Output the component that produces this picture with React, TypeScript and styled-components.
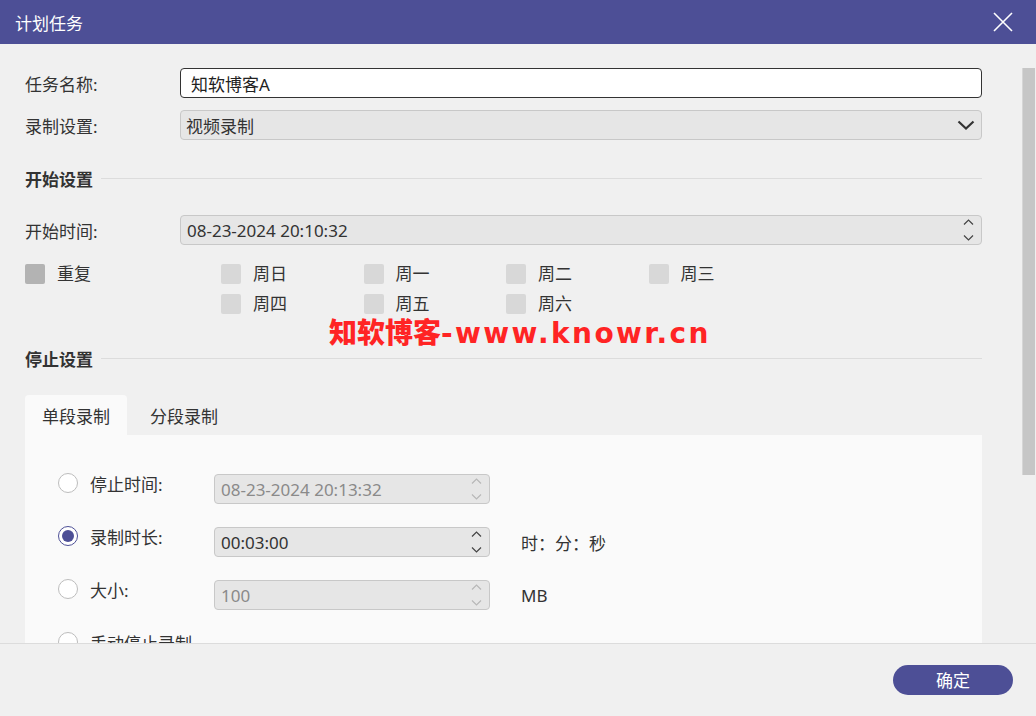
import React from 'react'
import styled, { createGlobalStyle, css } from 'styled-components'

const FONT = `"Noto Sans", "Noto Sans CJK SC", "Liberation Sans", sans-serif`
const ACCENT = '#4d4f96'

const GlobalStyle = createGlobalStyle`
  html, body { margin: 0; padding: 0; }
  body { font-family: ${FONT}; color: #333; background: #f0f0f0; }
  * { box-sizing: border-box; }
`

const Window = styled.div`
  width: 1036px;
  height: 716px;
  display: flex;
  flex-direction: column;
  background: #f0f0f0;
  overflow: hidden;
  position: relative;
`

const TitleBar = styled.div`
  height: 44px;
  flex: none;
  background: ${ACCENT};
  display: flex;
  align-items: center;
  justify-content: space-between;
  padding: 0 22px 0 15px;
  color: #fff;
  font-size: 17px;
`

const CloseBtn = styled.div`
  width: 22px;
  height: 22px;
  display: flex;
  align-items: center;
  justify-content: center;
`

const Body = styled.div`
  flex: 1;
  display: flex;
  overflow: hidden;
`

const Content = styled.div`
  flex: 1;
  padding: 24px 40px 0 25px;
  display: flex;
  flex-direction: column;
  position: relative;
`

const Rail = styled.div`
  width: 14px;
  flex: none;
  padding-top: 24px;
  padding-right: 1px;
`

const Thumb = styled.div`
  height: 407px;
  background: #c6c6c6;
  border-left: 1px solid #d6d6d6;
`

const FormRow = styled.div<{ $mt?: number }>`
  display: flex;
  align-items: center;
  height: 30px;
  margin-top: ${(p) => p.$mt ?? 0}px;
`

const Label = styled.div`
  width: 155px;
  flex: none;
  font-size: 17px;
  color: #333;
`

const boxBase = css`
  height: 30px;
  border-radius: 4px;
  display: flex;
  align-items: center;
  font-size: 17px;
  font-family: ${FONT};
`

const TextInput = styled.div`
  ${boxBase}
  flex: 1;
  background: #fff;
  border: 1px solid #333;
  padding-left: 10px;
  color: #222;
`

const SelectBox = styled.div`
  ${boxBase}
  flex: 1;
  background: #e6e6e6;
  border: 1px solid #c8c8c8;
  padding: 0 6px 0 5px;
  justify-content: space-between;
  color: #333;
`

const SpinBox = styled.div<{ $disabled?: boolean; $w?: number }>`
  ${boxBase}
  ${(p) => (p.$w ? `width: ${p.$w}px; flex: none;` : 'flex: 1;')}
  background: #e6e6e6;
  border: 1px solid #c8c8c8;
  padding: 0 7px 0 6px;
  justify-content: space-between;
  color: ${(p) => (p.$disabled ? '#8a8a8a' : '#333')};
`

const SpinArrows = styled.div`
  display: flex;
  flex-direction: column;
  gap: 10px;
`

const Section = styled.div<{ $mt: number }>`
  display: flex;
  align-items: center;
  margin-top: ${(p) => p.$mt}px;
  height: 24px;
  font-size: 17px;
  font-weight: 700;
  color: #333;
  &::after {
    content: '';
    flex: 1;
    height: 1px;
    background: #dcdcdc;
    margin-left: 8px;
  }
`

const RepeatRow = styled.div`
  display: flex;
  margin-top: 19px;
`

const RepeatCol = styled.div`
  width: 196px;
  flex: none;
`

const DayGrid = styled.div`
  display: grid;
  grid-template-columns: repeat(4, 142.5px);
  row-gap: 10px;
`

const CheckItem = styled.label`
  display: flex;
  align-items: center;
  height: 20px;
  line-height: 20px;
  font-size: 17px;
  color: #333;
`

const Box = styled.span<{ $dark?: boolean }>`
  width: 20px;
  height: 20px;
  border-radius: 2px;
  background: ${(p) => (p.$dark ? '#b3b3b3' : '#d8d8d8')};
  margin-right: 12px;
  flex: none;
`

const Watermark = styled.div`
  position: absolute;
  left: 329px;
  top: 273px;
  line-height: 28px;
  font-family: "Noto Sans CJK SC", sans-serif;
  font-size: 28px;
  font-weight: 900;
  color: #ff2424;
  white-space: nowrap;
  display: flex;
  align-items: baseline;
`

const WatermarkLatin = styled.span`
  font-family: "DejaVu Sans", sans-serif;
  font-weight: 700;
  font-size: 28px;
  letter-spacing: 2.4px;
`

const Tabs = styled.div`
  display: flex;
  margin-top: 25px;
  height: 40px;
`

const Tab = styled.div<{ $active?: boolean }>`
  height: 40px;
  padding: ${(p) => (p.$active ? '0 17px 0 17px' : '0 17px 0 23px')};
  display: flex;
  align-items: center;
  font-size: 17px;
  color: #333;
  border-radius: 4px 4px 0 0;
  background: ${(p) => (p.$active ? '#fafafa' : 'transparent')};
`

const Panel = styled.div`
  background: #fafafa;
  padding: 39px 0 30px 33px;
  display: flex;
  flex-direction: column;
  gap: 23px;
`

const OptionRow = styled.div`
  display: flex;
  align-items: center;
  height: 30px;
`

const RadioLabel = styled.div`
  display: flex;
  align-items: center;
  width: 156px;
  flex: none;
  font-size: 17px;
  color: #333;
  margin-top: -12px;
`

const Radio = styled.span<{ $checked?: boolean }>`
  width: 20px;
  height: 20px;
  border-radius: 50%;
  flex: none;
  margin-right: 12px;
  background: #fff;
  border: 1.5px solid ${(p) => (p.$checked ? ACCENT : '#bdbdbd')};
  display: flex;
  align-items: center;
  justify-content: center;
  &::after {
    content: '';
    width: 12px;
    height: 12px;
    border-radius: 50%;
    background: ${(p) => (p.$checked ? ACCENT : 'transparent')};
  }
`

const Unit = styled.div`
  margin-left: 31px;
  font-size: 17px;
  color: #333;
`

const Footer = styled.div`
  height: 73px;
  flex: none;
  border-top: 1px solid #dcdcdc;
  background: #f0f0f0;
  display: flex;
  align-items: center;
  justify-content: flex-end;
  padding: 0 23px 0 0;
  position: relative;
  z-index: 2;
`

const OkButton = styled.button`
  width: 120px;
  height: 30px;
  border: none;
  border-radius: 15px;
  background: ${ACCENT};
  color: #fff;
  font-family: ${FONT};
  font-size: 17px;
  margin-top: -1px;
`

const Chevron = ({ up, color = '#444' }: { up?: boolean; color?: string }) => (
  <svg width="11" height="6" viewBox="0 0 11 6" fill="none">
    <path d={up ? 'M1 5.5 L5.5 1 L10 5.5' : 'M1 0.5 L5.5 5 L10 0.5'} stroke={color} strokeWidth="1.2" />
  </svg>
)

const Spinner = ({ disabled }: { disabled?: boolean }) => (
  <SpinArrows>
    <Chevron up color={disabled ? '#b8b8b8' : '#444'} />
    <Chevron color={disabled ? '#b8b8b8' : '#444'} />
  </SpinArrows>
)

const days = ['周日', '周一', '周二', '周三', '周四', '周五', '周六']

export default function App() {
  return (
    <Window>
      <GlobalStyle />
      <TitleBar>
        <span>计划任务</span>
        <CloseBtn>
          <svg width="20" height="20" viewBox="0 0 20 20">
            <path d="M1 1 L19 19 M19 1 L1 19" stroke="#fff" strokeWidth="1.6" />
          </svg>
        </CloseBtn>
      </TitleBar>
      <Body>
        <Content>
          <FormRow>
            <Label>任务名称:</Label>
            <TextInput>知软博客A</TextInput>
          </FormRow>
          <FormRow $mt={12}>
            <Label>录制设置:</Label>
            <SelectBox>
              <span>视频录制</span>
              <svg width="18" height="10" viewBox="0 0 18 10" fill="none">
                <path d="M1.5 1.5 L9 8.5 L16.5 1.5" stroke="#333" strokeWidth="2.2" />
              </svg>
            </SelectBox>
          </FormRow>
          <Section $mt={26}>开始设置</Section>
          <FormRow $mt={25}>
            <Label>开始时间:</Label>
            <SpinBox>
              <span>08-23-2024 20:10:32</span>
              <Spinner />
            </SpinBox>
          </FormRow>
          <RepeatRow>
            <RepeatCol>
              <CheckItem>
                <Box $dark />
                重复
              </CheckItem>
            </RepeatCol>
            <DayGrid>
              {days.map((d) => (
                <CheckItem key={d}>
                  <Box />
                  {d}
                </CheckItem>
              ))}
            </DayGrid>
          </RepeatRow>
          <Watermark>
            知软博客<WatermarkLatin>-www.knowr.cn</WatermarkLatin>
          </Watermark>
          <Section $mt={32}>停止设置</Section>
          <Tabs>
            <Tab $active>单段录制</Tab>
            <Tab>分段录制</Tab>
          </Tabs>
          <Panel>
            <OptionRow>
              <RadioLabel>
                <Radio />
                停止时间:
              </RadioLabel>
              <SpinBox $disabled $w={276}>
                <span>08-23-2024 20:13:32</span>
                <Spinner disabled />
              </SpinBox>
            </OptionRow>
            <OptionRow>
              <RadioLabel>
                <Radio $checked />
                录制时长:
              </RadioLabel>
              <SpinBox $w={276}>
                <span>00:03:00</span>
                <Spinner />
              </SpinBox>
              <Unit>时：分：秒</Unit>
            </OptionRow>
            <OptionRow>
              <RadioLabel>
                <Radio />
                大小:
              </RadioLabel>
              <SpinBox $disabled $w={276}>
                <span>100</span>
                <Spinner disabled />
              </SpinBox>
              <Unit>MB</Unit>
            </OptionRow>
            <OptionRow>
              <RadioLabel>
                <Radio />
                手动停止录制
              </RadioLabel>
            </OptionRow>
          </Panel>
        </Content>
        <Rail>
          <Thumb />
        </Rail>
      </Body>
      <Footer>
        <OkButton>确定</OkButton>
      </Footer>
    </Window>
  )
}
